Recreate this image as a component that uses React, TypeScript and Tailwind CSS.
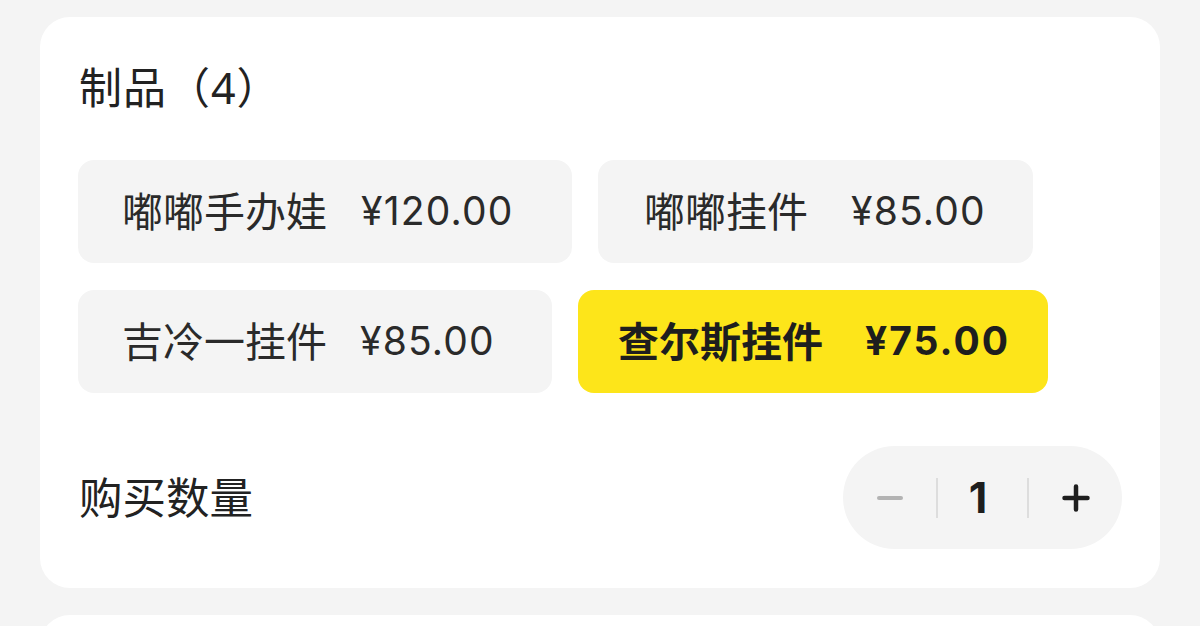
import React from "react";

const font = { fontFamily: '"Noto Sans", "Noto Sans CJK SC", sans-serif' };
const priceFont = { fontFamily: 'Inter, "Noto Sans", sans-serif' };

type Chip = { name: string; price: string; w: string; pl: string; gap: string; selected?: boolean };

const chips: Chip[] = [
  { name: "嘟嘟手办娃", price: "¥120.00", w: "w-[494px]", pl: "pl-[44px]", gap: "ml-[34px]" },
  { name: "嘟嘟挂件", price: "¥85.00", w: "w-[435px]", pl: "pl-[46px]", gap: "ml-[43px]" },
  { name: "吉冷一挂件", price: "¥85.00", w: "w-[474px]", pl: "pl-[44px]", gap: "ml-[33px]" },
  { name: "查尔斯挂件", price: "¥75.00", w: "w-[470px]", pl: "pl-[40px]", gap: "ml-[42px]", selected: true },
];

export default function App() {
  return (
    <div className="h-[626px] w-[1200px] overflow-hidden bg-[#f4f4f4]" style={font}>
      <div className="pt-[17px] px-[40px]">
        <div className="rounded-[30px] bg-white px-[38px] pt-[60px] pb-[39px]">
          <div className="text-[43px] leading-[56px] text-[#222] pl-[1px] -mt-[17px] h-[56px] tracking-[1px]">
            制品（4）
          </div>
          <div className="mt-[44px] flex flex-wrap gap-x-[26px] gap-y-[27px]">
            {chips.map((c) =>
              c.selected ? (
                <div
                  key={c.name}
                  className={`${c.w} ${c.pl} h-[103px] rounded-[16px] bg-[#fde51a] flex items-center text-[41px] font-bold text-[#1e1e1e]`}
                >
                  <span>{c.name}</span>
                  <span className={`${c.gap} text-[39px] tracking-[2px]`} style={priceFont}>{c.price}</span>
                </div>
              ) : (
                <div
                  key={c.name}
                  className={`${c.w} ${c.pl} h-[103px] rounded-[16px] bg-[#f4f4f4] flex items-center text-[41px] text-[#2a2a2a]`}
                >
                  <span>{c.name}</span>
                  <span className={`${c.gap} text-[39px] tracking-[1.2px]`} style={priceFont}>{c.price}</span>
                </div>
              )
            )}
          </div>
          <div className="mt-[53px] flex items-center justify-between">
            <div className="pl-[1px] text-[43.5px] text-[#222]">购买数量</div>
            <div className="flex h-[103px] w-[279px] items-center rounded-full bg-[#f4f4f4]">
              <div className="flex h-full w-[93px] items-center justify-center">
                <div className="h-[4px] w-[26px] rounded-full bg-[#b3b3b3]" />
              </div>
              <div className="h-[40px] w-[2px] bg-[#dddddd]" />
              <div className="flex h-full flex-1 items-center justify-center pr-[9px] text-[43px] font-bold text-[#1e1e1e]" style={priceFont}>
                1
              </div>
              <div className="h-[40px] w-[2px] bg-[#dddddd]" />
              <div className="flex h-full w-[93px] items-center justify-center">
                <svg width="28" height="28" viewBox="0 0 28 28">
                  <path d="M14 2.5v23M2.5 14h23" stroke="#1e1e1e" strokeWidth="4.5" strokeLinecap="round" />
                </svg>
              </div>
            </div>
          </div>
        </div>
        <div className="mt-[27px] h-[200px] rounded-[30px] bg-white" />
      </div>
    </div>
  );
}
